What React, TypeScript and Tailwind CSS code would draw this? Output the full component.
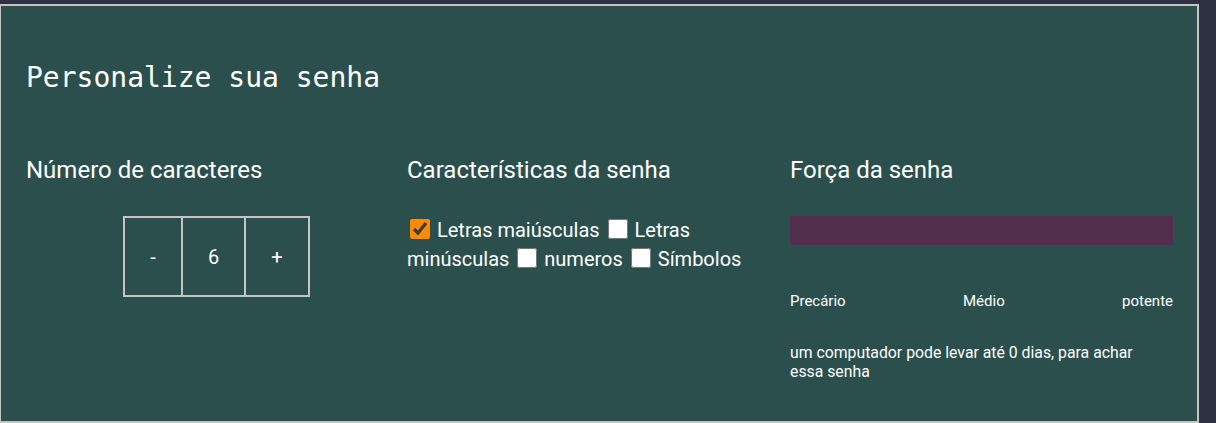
import { useState } from 'react'

const OPTIONS = [
  { id: 'upper', label: 'Letras maiúsculas' },
  { id: 'lower', label: 'Letras minúsculas' },
  { id: 'numbers', label: 'numeros' },
  { id: 'symbols', label: 'Símbolos' },
]

export default function App() {
  const [length, setLength] = useState(6)
  const [checked, setChecked] = useState<Record<string, boolean>>({ upper: true })

  return (
    <div className="min-h-screen bg-[#2e3142] pt-1 pr-[17px] font-['Roboto',sans-serif] text-white">
      {/* Panel */}
      <div className="h-[419px] border-2 border-l border-[#c4c4c4] bg-[#2a4f4c] pl-[25px] pr-6">
        <h1 className="mt-[52px] font-['DejaVu_Sans_Mono',monospace] text-[28px] leading-[40px]">
          Personalize sua senha
        </h1>

        <div className="mt-[56px] grid grid-cols-[381px_383px_383px]">
          {/* Number of characters */}
          <div>
            <h2 className="text-[24px] leading-8">Número de caracteres</h2>
            <div className="mt-[30px] flex justify-center">
              <div className="flex h-[81px] border-2 border-[#c4c4c4] text-[20px]">
                <button
                  className="w-[58px] border-r-2 border-[#c4c4c4]"
                  onClick={() => setLength(Math.max(1, length - 1))}
                >
                  -
                </button>
                <div className="flex w-[63px] items-center justify-center border-r-2 border-[#c4c4c4]">
                  {length}
                </div>
                <button className="w-[62px]" onClick={() => setLength(length + 1)}>
                  +
                </button>
              </div>
            </div>
          </div>

          {/* Password characteristics */}
          <div>
            <h2 className="text-[24px] leading-8">Características da senha</h2>
            <div className="mt-[30px] pr-2 text-[20px] leading-[29px]">
              {OPTIONS.map((o) => (
                <span key={o.id}>
                  <input
                    type="checkbox"
                    checked={!!checked[o.id]}
                    onChange={(e) => setChecked({ ...checked, [o.id]: e.target.checked })}
                    className="ml-[3px] mr-[2px] h-5 w-5 accent-[#ff8a00] align-[-2px]"
                  />{' '}
                  {o.label}{' '}
                </span>
              ))}
            </div>
          </div>

          {/* Password strength */}
          <div>
            <h2 className="text-[24px] leading-8">Força da senha</h2>
            <div className="mt-[30px] h-[29px] bg-[#52304d]" />
            <div className="mt-[46px] flex justify-between text-[15px] leading-5">
              <span>Precário</span>
              <span>Médio</span>
              <span>potente</span>
            </div>
            <p className="mt-[32px] w-[360px] text-[15.8px] leading-[19px]">
              um computador pode levar até 0 dias, para achar essa senha
            </p>
          </div>
        </div>
      </div>
    </div>
  )
}
